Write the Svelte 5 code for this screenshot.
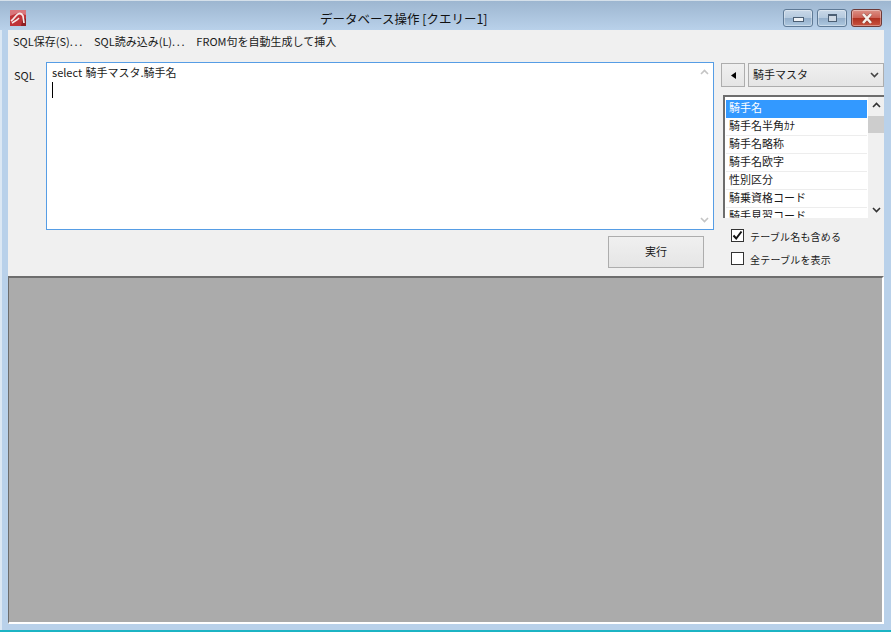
<script>
  const columns = ["騎手名", "騎手名半角ｶﾅ", "騎手名略称", "騎手名欧字", "性別区分", "騎乗資格コード", "騎手見習コード"];
  let selected = 0;
</script>

<div class="window">
  <div class="titlebar">
    <svg class="appicon" width="16" height="16" viewBox="0 0 16 16">
      <rect width="16" height="16" fill="#bf3338" />
      <path d="M0 0 H16 V5 L8 3 L0 6 Z" fill="#d9767c" />
      <path d="M13 7 L16 9 V16 H11 Z" fill="#8f1f24" />
      <path d="M1 11 C4 9 5 6 8 4 C10 3 12 4 13 6 L14 13" stroke="#f7e9e9" stroke-width="1.7" fill="none" />
      <path d="M2 13 L7 10 L9 8" stroke="#f7e9e9" stroke-width="1.5" fill="none" />
    </svg>
    <div class="title">データベース操作 [クエリー1]</div>
    <div class="controls">
      <div class="ctl min"><span></span></div>
      <div class="ctl max"><span></span></div>
      <div class="ctl close">
        <svg width="12" height="11" viewBox="0 0 12 11">
          <path d="M2 1 L10 10 M10 1 L2 10" stroke="#4a2a28" stroke-width="3.4" opacity="0.45" />
          <path d="M2 1 L10 10 M10 1 L2 10" stroke="#f6efe9" stroke-width="2.6" />
        </svg>
      </div>
    </div>
  </div>

  <div class="client">
    <div class="menu">
      <span>SQL保存(S)<span class="dots">...</span></span>
      <span>SQL読み込み(L)<span class="dots">...</span></span>
      <span>FROM句を自動生成して挿入</span>
    </div>

    <div class="form">
      <div class="sqllabel">SQL</div>
      <div class="leftcol">
        <div class="editor">
          <div class="code">select 騎手マスタ.騎手名<i class="caret"></i></div>
          <div class="editscroll">
            <svg width="9" height="6" viewBox="0 0 9 6"><path d="M1 5 L4.5 1.5 L8 5" stroke="#c4c4c4" stroke-width="1.6" fill="none" /></svg>
            <svg width="9" height="6" viewBox="0 0 9 6"><path d="M1 1 L4.5 4.5 L8 1" stroke="#c4c4c4" stroke-width="1.6" fill="none" /></svg>
          </div>
        </div>
        <div class="runrow">
          <button class="run">実行</button>
        </div>
      </div>

      <div class="rightcol">
        <div class="picker">
          <button class="back"><svg width="5" height="7" viewBox="0 0 5 7"><path d="M5 0 L0 3.5 L5 7 Z" fill="#000" /></svg></button>
          <div class="select">
            <span>騎手マスタ</span>
            <svg width="9" height="6" viewBox="0 0 9 6"><path d="M1 1 L4.5 4.5 L8 1" stroke="#444" stroke-width="1.6" fill="none" /></svg>
          </div>
        </div>
        <div class="listbox">
          <div class="rows">
            {#each columns as col, i}
              <div class="row" class:selected={i === selected}>{col}</div>
            {/each}
          </div>
          <div class="listscroll">
            <svg class="up" width="9" height="6" viewBox="0 0 9 6"><path d="M1 5 L4.5 1.5 L8 5" stroke="#333" stroke-width="1.6" fill="none" /></svg>
            <div class="thumb"></div>
            <svg class="down" width="9" height="6" viewBox="0 0 9 6"><path d="M1 1 L4.5 4.5 L8 1" stroke="#333" stroke-width="1.6" fill="none" /></svg>
          </div>
        </div>
        <div class="checks">
          <div class="check">
            <div class="box">
              <svg width="11" height="11" viewBox="0 0 11 11"><path d="M1.5 5.5 L4.2 8.5 L9.5 1.5" stroke="#111" stroke-width="2" fill="none" /></svg>
            </div>
            <span>テーブル名も含める</span>
          </div>
          <div class="check">
            <div class="box"></div>
            <span>全テーブルを表示</span>
          </div>
        </div>
      </div>
    </div>

    <div class="mdi"></div>
  </div>
  <div class="bottom"></div>
</div>

<style>
  :global(body) {
    margin: 0;
    background: #b9d1ea;
    font-family: "Noto Sans CJK JP", "Noto Sans", sans-serif;
    font-size: 11px;
    color: #1a1a1a;
  }
  .window {
    width: 891px;
    height: 632px;
    display: flex;
    flex-direction: column;
    overflow: hidden;
    background: #b9d1ea;
    box-shadow: inset 2px 0 0 #dce8f4;
  }
  .titlebar {
    height: 30px;
    flex: none;
    box-sizing: border-box;
    border-top: 1px solid #d5e0ea;
    display: flex;
    align-items: flex-start;
    background: linear-gradient(#9db6d0, #b9d1ea);
  }
  .appicon {
    margin: 9px 0 0 10px;
    flex: none;
  }
  .title {
    margin: 8px 0 0 294px;
    font-size: 12.5px;
    line-height: 20px;
    color: #111;
  }
  .controls {
    margin-left: auto;
    margin-right: 9px;
    display: flex;
    gap: 4px;
    margin-top: 8px;
  }
  .ctl {
    width: 30px;
    height: 18px;
    box-sizing: border-box;
    border: 1px solid #5f7a96;
    border-radius: 3px;
    display: flex;
    align-items: center;
    justify-content: center;
    background: linear-gradient(#c9d8e8 0, #b4c9de 50%, #93aeca 51%, #aec8e0 100%);
    box-shadow: inset 0 0 0 1px rgba(255, 255, 255, 0.35);
  }
  .min span {
    width: 11px;
    height: 5px;
    box-sizing: border-box;
    background: #eef2f6;
    border: 1px solid #4c5f74;
    margin-top: 3px;
  }
  .max span {
    width: 9px;
    height: 8px;
    box-sizing: border-box;
    background: #cfd9e4;
    border: 1px solid #4c5f74;
    border-top-width: 2px;
  }
  .close {
    width: 31px;
    background: linear-gradient(#dc9186 0, #cc6054 50%, #b0301f 51%, #c85340 100%);
    border-color: #6d3a38;
  }
  .client {
    flex: 1;
    margin: 0 7px 0 8px;
    background: #f0f0f0;
    display: flex;
    flex-direction: column;
    min-height: 0;
  }
  .menu {
    height: 22px;
    flex: none;
    display: flex;
    gap: 10px;
    padding-left: 5px;
    line-height: 22px;
  }
  .dots {
    letter-spacing: 1.7px;
  }
  .form {
    height: 224px;
    flex: none;
    display: flex;
    padding-top: 10px;
    box-sizing: border-box;
  }
  .sqllabel {
    width: 38px;
    padding: 5px 0 0 6px;
    box-sizing: border-box;
    line-height: 16px;
  }
  .leftcol {
    width: 668px;
    flex: none;
  }
  .editor {
    height: 168px;
    box-sizing: border-box;
    border: 1px solid #569de5;
    background: #fff;
    display: flex;
  }
  .code {
    flex: 1;
    padding: 0 5px;
    line-height: 18px;
    word-spacing: 1px;
  }
  .caret {
    display: block;
    width: 1px;
    height: 16px;
    background: #000;
    margin-top: 1px;
  }
  .editscroll {
    width: 17px;
    display: flex;
    flex-direction: column;
    justify-content: space-between;
    align-items: center;
    padding: 6px 0;
    box-sizing: border-box;
  }
  .runrow {
    display: flex;
    justify-content: flex-end;
    padding: 6px 10px 0 0;
  }
  .run {
    width: 96px;
    height: 32px;
    border: 1px solid #adadad;
    background: linear-gradient(#f0f0f0, #e5e5e5);
    font: inherit;
    color: inherit;
    padding: 0 0 2px;
  }
  .rightcol {
    flex: 1;
    min-width: 0;
    padding-left: 7px;
  }
  .picker {
    display: flex;
    gap: 3px;
    height: 24px;
    margin-top: 1px;
  }
  .back {
    width: 24px;
    height: 24px;
    box-sizing: border-box;
    border: 1px solid #adadad;
    background: linear-gradient(#f0f0f0, #e5e5e5);
    padding: 0;
    display: flex;
    align-items: center;
    justify-content: center;
  }
  .select {
    flex: 1;
    box-sizing: border-box;
    border: 1px solid #adadad;
    background: linear-gradient(#f0f0f0, #e5e5e5);
    display: flex;
    align-items: center;
    justify-content: space-between;
    padding: 0 4px 0 4px;
  }
  .select span {
    margin-bottom: 3px;
  }
  .listbox {
    margin: 8px 0 0 2px;
    height: 123px;
    box-sizing: border-box;
    border-top: 2px solid #6d6d6d;
    border-left: 2px solid #6d6d6d;
    background: #fff;
    display: flex;
    overflow: hidden;
  }
  .rows {
    flex: 1;
    padding: 3px 1px 0 1px;
    overflow: hidden;
  }
  .row {
    height: 18px;
    box-sizing: border-box;
    line-height: 15px;
    border-bottom: 1px solid #ededed;
    padding-left: 3px;
    white-space: nowrap;
  }
  .row.selected {
    background: #3399ff;
    color: #fff;
    border-bottom-color: #3399ff;
  }
  .listscroll {
    width: 16px;
    flex: none;
    background: #f0f0f0;
    position: relative;
    display: flex;
    flex-direction: column;
    align-items: center;
  }
  .up {
    margin-top: 5px;
  }
  .thumb {
    width: 100%;
    height: 17px;
    background: #cdcdcd;
    margin-top: 8px;
  }
  .down {
    position: absolute;
    bottom: 5px;
  }
  .checks {
    padding: 11px 0 0 10px;
    display: flex;
    flex-direction: column;
    gap: 10px;
    font-size: 10px;
  }
  .check {
    display: flex;
    align-items: center;
    gap: 6px;
    height: 13px;
  }
  .check span {
    margin-top: 2px;
    letter-spacing: 0.2px;
  }
  .box {
    width: 13px;
    height: 13px;
    border: 1px solid #333;
    box-sizing: border-box;
    background: #fff;
    display: flex;
    align-items: center;
    justify-content: center;
  }
  .mdi {
    flex: 1;
    background: #ababab;
    border-top: 2px solid #6d6d6d;
    border-left: 1px solid #6d6d6d;
    border-right: 2px solid #fff;
    border-bottom: 2px solid #fff;
    box-sizing: border-box;
  }
  .bottom {
    height: 8px;
    flex: none;
    box-sizing: border-box;
    border-bottom: 2px solid #1cb4c4;
  }
</style>
